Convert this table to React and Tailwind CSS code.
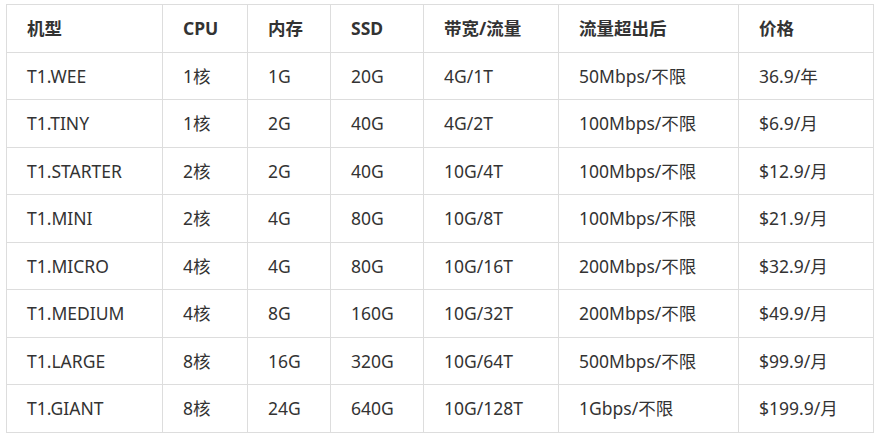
const headers = ["机型", "CPU", "内存", "SSD", "带宽/流量", "流量超出后", "价格"];

const widths = ["w-[156px]", "w-[85px]", "w-[83px]", "w-[93px]", "w-[135px]", "w-[180px]", "w-[135px]"];

const rows = [
  ["T1.WEE", "1核", "1G", "20G", "4G/1T", "50Mbps/不限", "36.9/年"],
  ["T1.TINY", "1核", "2G", "40G", "4G/2T", "100Mbps/不限", "$6.9/月"],
  ["T1.STARTER", "2核", "2G", "40G", "10G/4T", "100Mbps/不限", "$12.9/月"],
  ["T1.MINI", "2核", "4G", "80G", "10G/8T", "100Mbps/不限", "$21.9/月"],
  ["T1.MICRO", "4核", "4G", "80G", "10G/16T", "200Mbps/不限", "$32.9/月"],
  ["T1.MEDIUM", "4核", "8G", "160G", "10G/32T", "200Mbps/不限", "$49.9/月"],
  ["T1.LARGE", "8核", "16G", "320G", "10G/64T", "500Mbps/不限", "$99.9/月"],
  ["T1.GIANT", "8核", "24G", "640G", "10G/128T", "1Gbps/不限", "$199.9/月"],
];

const cellClass = "border border-[#dddddd] px-5 h-[47.5px] text-left align-middle whitespace-nowrap";

export default function App() {
  return (
    <div className="bg-white w-[876px] h-[439px] pl-[6px] pt-[4px] font-['Noto_Sans','Noto_Sans_CJK_SC',sans-serif] text-[17.5px] leading-6 text-[#333333]">
      <table className="border-collapse table-fixed w-[867px]">
        <colgroup>
          {widths.map((w, i) => (
            <col key={i} className={w} />
          ))}
        </colgroup>
        <thead>
          <tr>
            {headers.map((h) => (
              <th key={h} className={`${cellClass} font-bold`}>
                {h}
              </th>
            ))}
          </tr>
        </thead>
        <tbody>
          {rows.map((row) => (
            <tr key={row[0]}>
              {row.map((cell, i) => (
                <td key={i} className={`${cellClass} font-normal`}>
                  {cell}
                </td>
              ))}
            </tr>
          ))}
        </tbody>
      </table>
    </div>
  );
}
